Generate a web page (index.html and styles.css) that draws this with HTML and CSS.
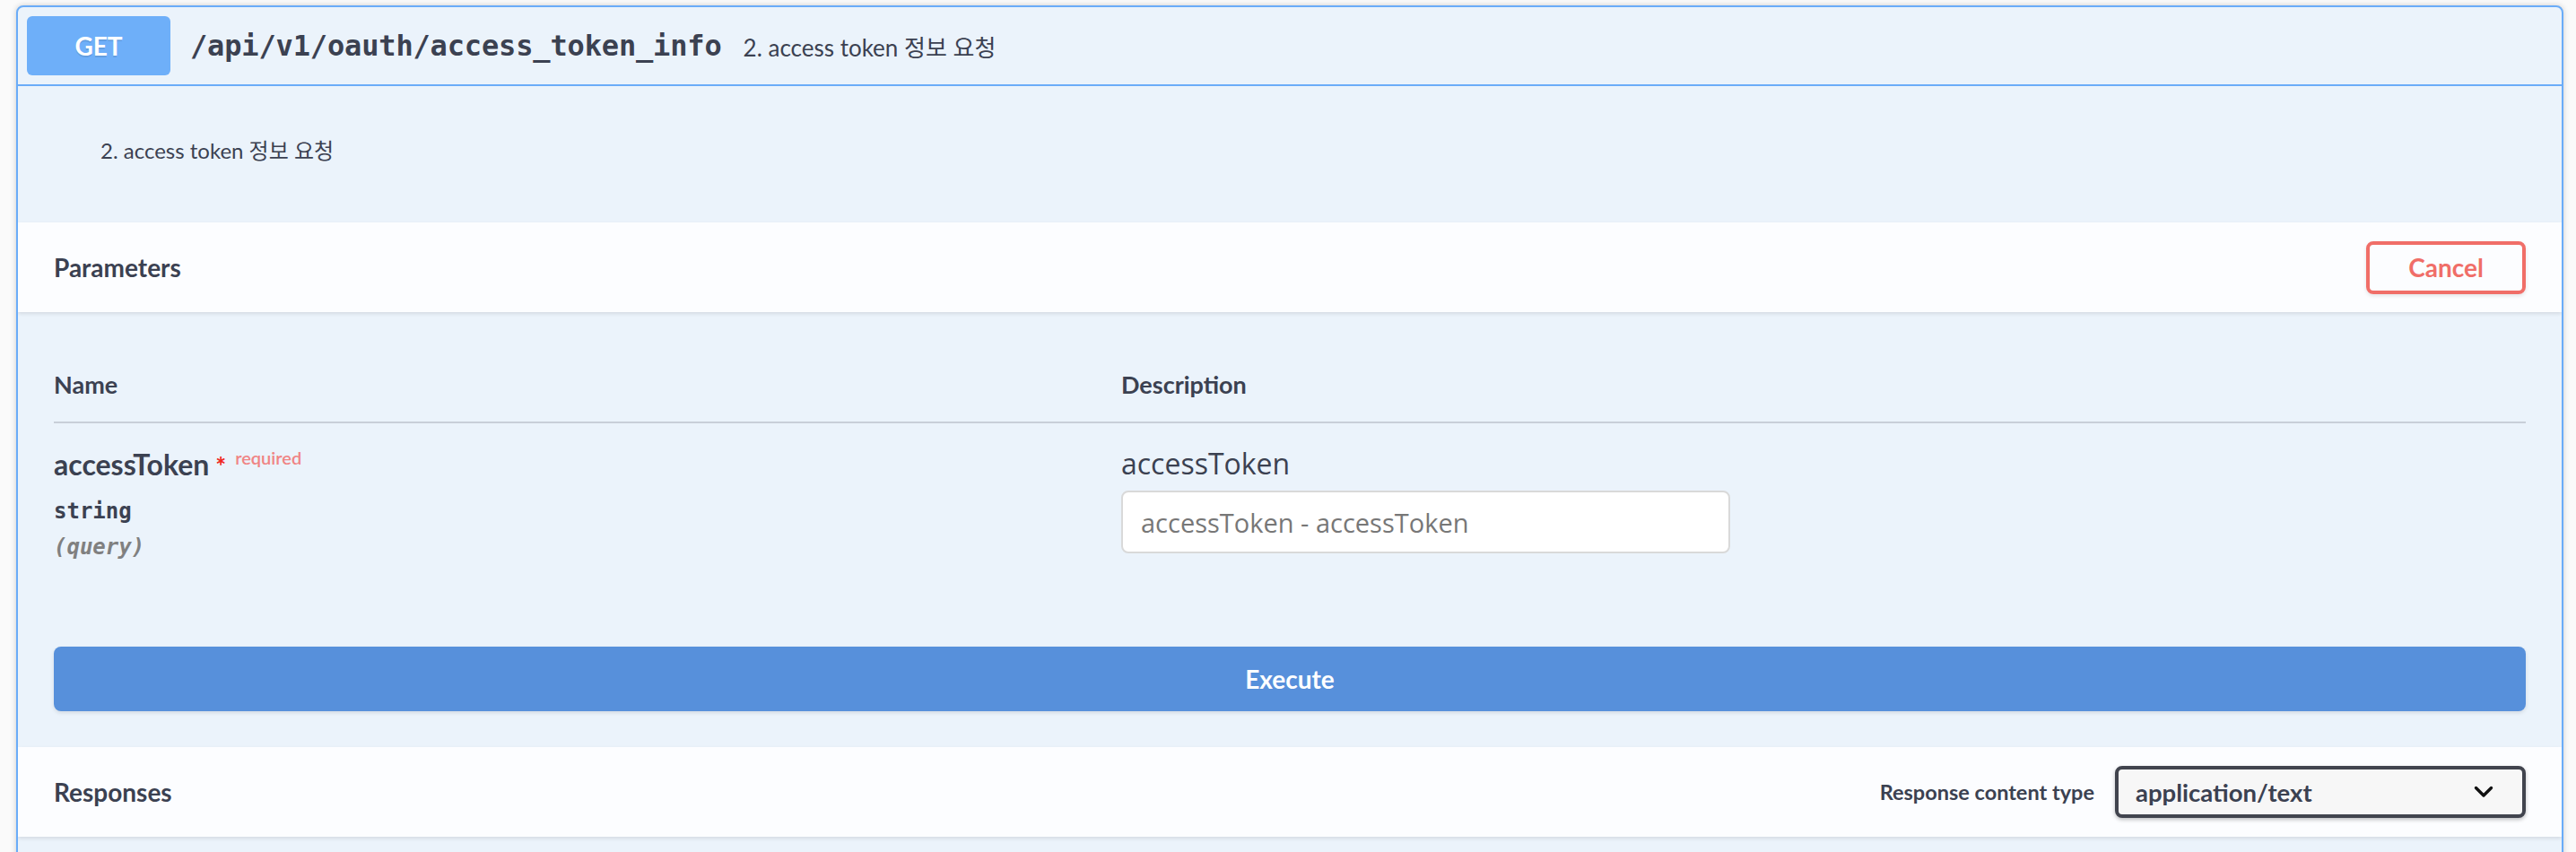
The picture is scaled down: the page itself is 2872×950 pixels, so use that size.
FILE: index.html
```html
<!DOCTYPE html>
<html lang="ko">
<head>
<meta charset="utf-8">
<title>access_token_info</title>
<link rel="stylesheet" href="styles.css">
</head>
<body>
<div class="page">
  <div class="opblock">
    <div class="summary">
      <span class="method">GET</span>
      <span class="path">/api/v1/oauth/access_token_info</span>
      <span class="summary-desc">2. access token 정보 요청</span>
    </div>

    <div class="desc-wrapper">
      <p class="desc-text">2. access token 정보 요청</p>
    </div>

    <div class="section-header">
      <h4 class="section-title">Parameters</h4>
      <button class="btn-cancel">Cancel</button>
    </div>

    <div class="table-container">
      <div class="thead">
        <div class="th">Name</div>
        <div class="th">Description</div>
      </div>
      <div class="trow">
        <div class="col-name">
          <div class="pname">accessToken<span class="star">&nbsp;*</span><span class="required">required</span></div>
          <div class="ptype">string</div>
          <div class="pin">(query)</div>
        </div>
        <div class="col-desc">
          <div class="pdesc">accessToken</div>
          <input class="pinput" type="text" placeholder="accessToken - accessToken">
        </div>
      </div>
    </div>

    <div class="execute-wrapper">
      <button class="btn-execute">Execute</button>
    </div>

    <div class="section-header">
      <h4 class="section-title">Responses</h4>
      <div class="content-type">
        <span class="ct-label">Response content type</span>
        <div class="select">
          <span class="select-value">application/text</span>
          <svg class="chevron" width="22" height="14" viewBox="0 0 22 14"><polyline points="2.5,2.5 11,11 19.5,2.5" fill="none" stroke="#111" stroke-width="3.4" stroke-linecap="round" stroke-linejoin="round"/></svg>
        </div>
      </div>
    </div>
    <div class="after"></div>
  </div>
</div>
</body>
</html>
```

FILE: styles.css
```css
html, body {
  margin: 0;
  padding: 0;
}
body {
  background: #fafafa;
  font-family: Lato, "Noto Sans CJK KR", sans-serif;
  color: #3b4151;
}
.page {
  padding: 6px 14px 0 18px;
}
.opblock {
  border: 2px solid #6aacf8;
  border-radius: 8px;
  background: #ebf3fb;
  box-shadow: 0 0 6px rgba(0, 0, 0, 0.19);
  overflow: hidden;
}
.summary {
  display: flex;
  align-items: center;
  padding: 10px;
  border-bottom: 2px solid #6aacf8;
}
.method {
  box-sizing: border-box;
  min-width: 160px;
  height: 66px;
  display: flex;
  align-items: center;
  justify-content: center;
  background: #6eaff9;
  border-radius: 6px;
  color: #fff;
  font: 700 28px Lato, sans-serif;
  text-shadow: 0 2px 0 rgba(0, 0, 0, 0.1);
}
.path {
  padding: 0 24px 0 22px;
  font: 600 32px "DejaVu Sans Mono", monospace;
  color: #3b4151;
  letter-spacing: -0.15px;
}
.summary-desc {
  font: 400 26px Lato, "Noto Sans CJK KR", sans-serif;
  color: #3b4151;
}
.desc-wrapper {
  padding: 55px 40px 63px 92px;
}
.desc-text {
  margin: 0;
  font: 400 24px/34px Lato, "Noto Sans CJK KR", sans-serif;
  color: #3b4151;
}
.section-header {
  box-sizing: border-box;
  height: 100px;
  display: flex;
  align-items: center;
  justify-content: space-between;
  padding: 0 40px;
  background: rgba(255, 255, 255, 0.82);
  box-shadow: 0 2px 4px rgba(0, 0, 0, 0.1);
}
.section-title {
  margin: 0;
  font: 700 28px Lato, sans-serif;
  color: #3b4151;
}
.btn-cancel {
  box-sizing: border-box;
  width: 178px;
  height: 59px;
  border: 4px solid #f06e68;
  border-radius: 8px;
  background: transparent;
  color: #f06e68;
  font: 700 28px Lato, sans-serif;
  box-shadow: 0 2px 4px rgba(0, 0, 0, 0.1);
  padding: 0;
}
.table-container {
  padding: 40px 40px 36px 40px;
}
.thead {
  display: grid;
  grid-template-columns: 1190px 1fr;
  padding: 24px 0;
  border-bottom: 2px solid rgba(59, 65, 81, 0.2);
}
.th {
  font: 700 27px/34px Lato, sans-serif;
  color: #3b4151;
}
.trow {
  display: grid;
  grid-template-columns: 1190px 1fr;
  padding: 20px 0;
}
.pname {
  font: 700 32px/52px Lato, sans-serif;
  color: #3b4151;
  white-space: nowrap;
}
.star {
  color: #f0281f;
  font-size: 28px;
}
.required {
  position: relative;
  top: -12px;
  padding-left: 10px;
  font: 600 20px Lato, sans-serif;
  color: #f08484;
}
.ptype {
  padding: 10px 0;
  font: 600 24px/30px "DejaVu Sans Mono", monospace;
  color: #3b4151;
}
.pin {
  font: italic 600 24px/30px "DejaVu Sans Mono", monospace;
  color: #808080;
}
.pdesc {
  font: 400 32px/50px "Open Sans", sans-serif;
  color: #3b4151;
}
.pinput {
  display: block;
  box-sizing: border-box;
  margin-top: 5px;
  width: 679px;
  height: 70px;
  padding: 0 20px;
  border: 2px solid #d9d9d9;
  border-radius: 8px;
  background: #fff;
  font: 400 29px "Open Sans", sans-serif;
  color: #3b4151;
  outline: none;
}
.pinput::placeholder {
  color: #777;
}
.execute-wrapper {
  padding: 40px;
}
.btn-execute {
  display: block;
  width: 100%;
  height: 72px;
  border: none;
  border-radius: 8px;
  background: #5790db;
  color: #fff;
  font: 700 28px Lato, sans-serif;
  box-shadow: 0 2px 4px rgba(0, 0, 0, 0.1);
}
.content-type {
  display: flex;
  align-items: center;
  gap: 23px;
}
.ct-label {
  font: 700 23.5px Lato, sans-serif;
  color: #3b4151;
}
.select {
  box-sizing: border-box;
  width: 458px;
  height: 58px;
  display: flex;
  align-items: center;
  justify-content: space-between;
  padding: 0 32px 0 19px;
  border: 4px solid #41444e;
  border-radius: 8px;
  background: #f7f7f7;
  box-shadow: 0 2px 4px rgba(0, 0, 0, 0.25);
}
.select-value {
  font: 700 27.5px Lato, sans-serif;
  color: #3b4151;
}
.chevron {
  display: block;
}
.after {
  height: 60px;
}
```
